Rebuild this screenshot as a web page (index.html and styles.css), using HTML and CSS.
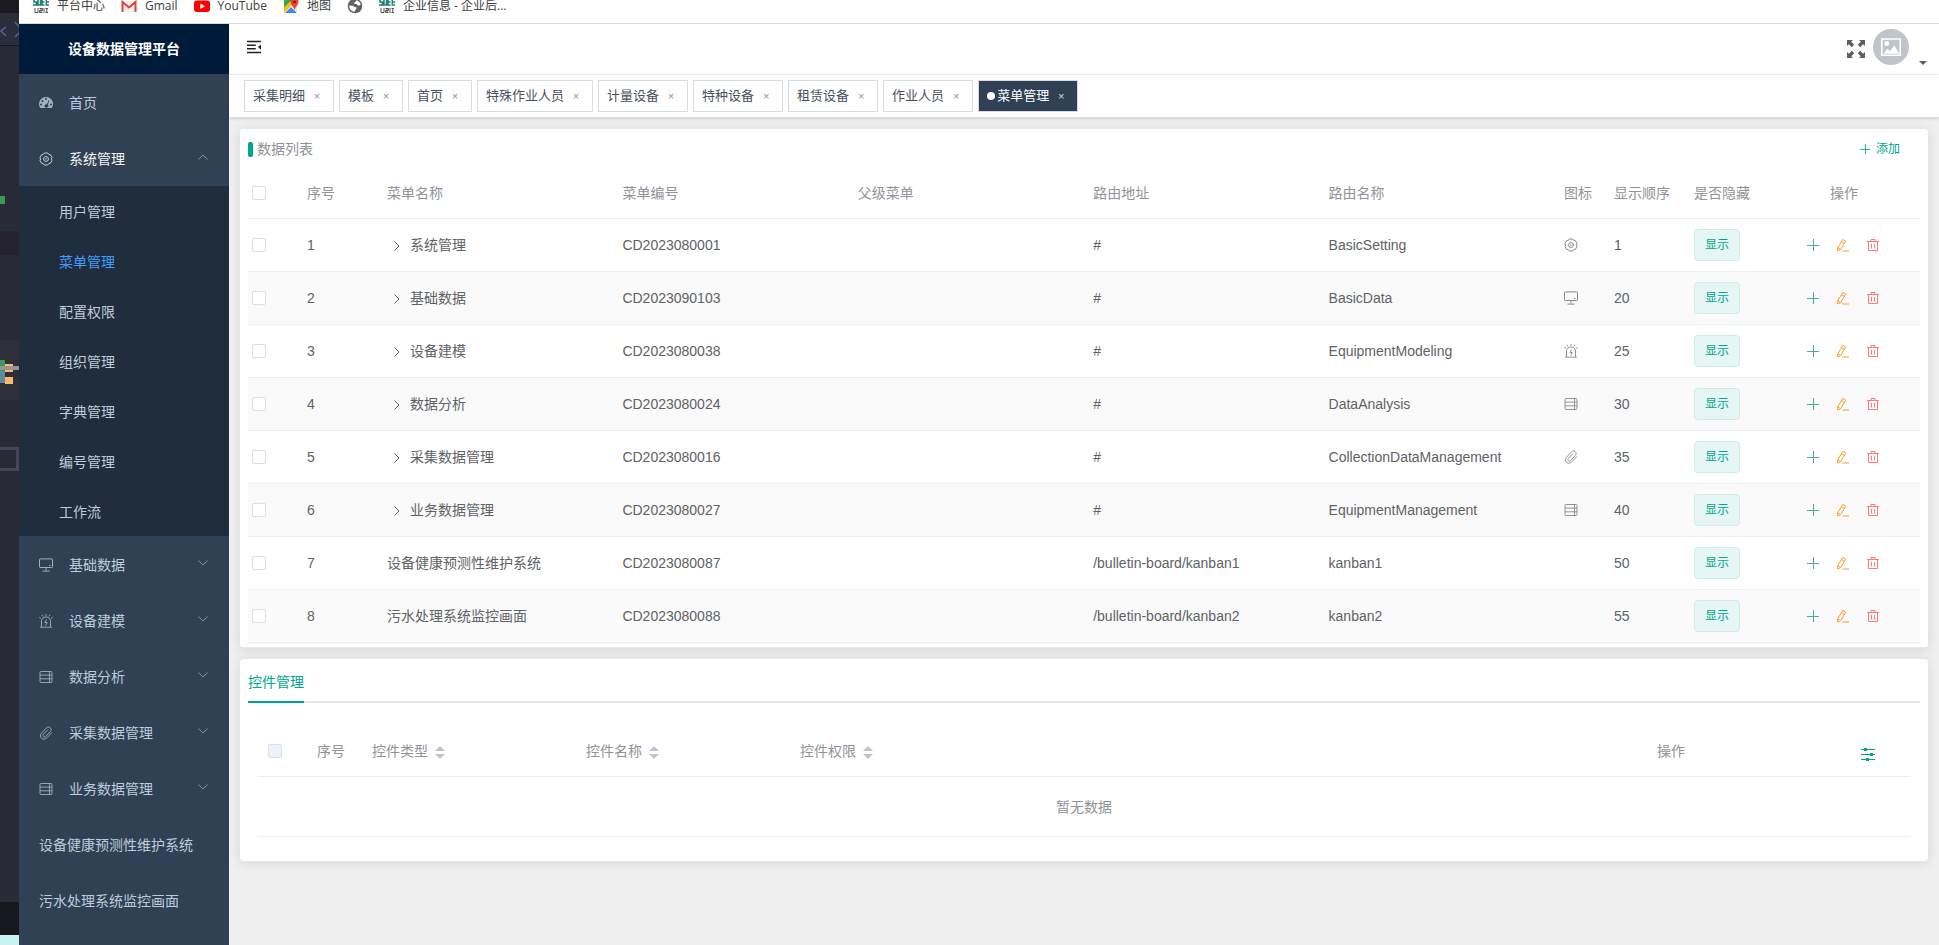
FILE: index.html
```html
<!DOCTYPE html>
<html lang="zh-CN">
<head>
<meta charset="utf-8">
<title>设备数据管理平台</title>
<link rel="stylesheet" href="styles.css">
</head>
<body>
<svg class="sprite" aria-hidden="true">
  <symbol id="i-dash" viewBox="0 0 14 14"><path fill="currentColor" fill-rule="evenodd" d="M7 1a7 7 0 0 0-7 7c0 1.400.4 2.700 1.100 3.700.1.200.3.300.5.300h10.800c.2 0 .4-.1.500-.3A7 7 0 0 0 7 1zM7 2a1 1 0 1 1 0 2 1 1 0 0 1 0-2zM2 7.500a1 1 0 1 1 0 2 1 1 0 0 1 0-2zM3.500 4a1 1 0 1 1 0 2 1 1 0 0 1 0-2zM12 7.500a1 1 0 1 1 0 2 1 1 0 0 1 0-2zM9.600 4.300l.8.300-1.500 4.100a1.900 1.900 0 1 1-3.400 1.400 1.900 1.900 0 0 1 2.500-1.800z"/></symbol>
  <symbol id="i-set" viewBox="0 0 14 14"><g fill="none" stroke="currentColor"><path stroke-linejoin="round" d="M5.300 1h3.400l1 1.400 1.700.3L13 5.500 12.500 7l.5 1.500-1.600 2.800-1.700.3-1 1.400H5.300l-1-1.400-1.700-.3L1 8.500 1.500 7 1 5.500l1.600-2.800 1.700-.3z"/><circle cx="7" cy="7" r="2.400"/><circle cx="7" cy="7" r=".7" fill="currentColor" stroke="none"/></g></symbol>
  <symbol id="i-mon" viewBox="0 0 14 14"><path fill="none" stroke="currentColor" d="M1.200.900h11.600q.7 0 .7.700v7.200q0 .7-.7.700H1.200q-.7 0-.7-.7V1.600q0-.7.7-.7zM7 9.500v3M3.500 13.100h7M10 7.500h1.500"/></symbol>
  <symbol id="i-alarm" viewBox="0 0 14 14"><path fill="none" stroke="currentColor" stroke-width=".9" d="M1 13.200h12M2.500 13V7a4.500 4 0 0 1 9 0v6M7 0v1.800M3 .8l1 1.600M11 .8l-1 1.600M.3 3.500l1.600.8M13.700 3.500l-1.600.8M7.500 5.500L5.800 8.500h2.400L6.600 11.500"/></symbol>
  <symbol id="i-data" viewBox="0 0 14 14"><path fill="none" stroke="currentColor" stroke-width=".9" d="M2 1.500h10q1 0 1 1v9q0 1-1 1H2q-1 0-1-1v-9q0-1 1-1zM1 5.100h12M1 8.800h12M10.500 1.500v11"/></symbol>
  <symbol id="i-clip" viewBox="0 0 14 14"><path fill="none" stroke="currentColor" stroke-width=".9" d="M12.800 6.500L8 11.700c-1.500 1.600-3.700 2-5.300.8S.9 9 2.400 7.300L7.300 2c1-1.100 2.800-1.400 4-.3s1 2.700 0 3.800L6.700 10.500c-.6.700-1.600.8-2.300.2s-.7-1.600 0-2.300L8.800 3.700"/></symbol>
  <symbol id="i-chev" viewBox="0 0 12 12"><path fill="none" stroke="currentColor" d="M1.500 3.500L6 8l4.500-4.500"/></symbol>
  <symbol id="i-plus" viewBox="0 0 14 14"><path fill="none" stroke="currentColor" d="M7.500 1v12M1 7.500h12"/></symbol>
  <symbol id="i-edit" viewBox="0 0 14 14"><path fill="none" stroke="currentColor" d="M6.500 13h6.500M6.700 1.500l3 1.600-5 8.500-3 1.400-.1-3zM5.500 3.700l3 1.700M1.800 9.800l2.800 1.700"/></symbol>
  <symbol id="i-del" viewBox="0 0 14 14"><path fill="none" stroke="currentColor" d="M1 3.500h12M2.500 3.500v9h9v-9M5 3.500v-2h4v2M5.500 6v4.500M8.500 6v4.500"/></symbol>
  <symbol id="i-sdee" viewBox="0 0 16 16"><path fill="none" stroke="#1d8177" stroke-width="1.500" d="M4 1H1v3h2.500v3H0M5 1v6h2.500V1zM11.500 1H9v6h2.500M9 4h2.500M16 1h-2.700v6H16M13 4h3"/><path fill="none" stroke="#555" d="M2 10v4.500h3V10M6.500 10.500h3v2h-3v2h3M8 10v5M11 10v5M12.500 10.500H15M12.500 14.500H15M13.800 10v5"/></symbol>
</svg>

<svg class="desktop" viewBox="0 0 19 945" aria-hidden="true">
  <path fill="#1b1a22" d="M0 0h19v13H0z"/><path fill="#2c2d3a" d="M0 13h19v33H0z"/><path fill="#17171f" d="M0 45h19v1H0z"/>
  <path fill="none" stroke="#5061a0" stroke-width="1.500" d="M6 27L1 31l5 5M15 22l7 8-7 7"/>
  <path fill="#40965b" d="M0 196h5v8H0z"/><path fill="#25242e" d="M0 231h19v24H0z"/><path fill="#2e2f3a" d="M0 340h19v60H0z"/>
  <path fill="#40965b" d="M0 360h5v11H0z"/><path fill="#5f8c9c" d="M0 371h5v12H0z"/>
  <path fill="#ffb870" d="M5 364h8v8H5zM5 377h8v7H5z"/><path fill="#94968f" d="M0 366h19v4H0z"/>
  <path fill="none" stroke="#45465c" stroke-width="3" d="M0 448.500h17.500v21H0"/>
  <path fill="#17171f" d="M0 902h19v33H0z"/><path fill="#c8f3f1" d="M0 935h19v10H0z"/>
</svg>

<div class="window">
  <nav class="bookmarks" aria-label="书签">
    <a href="#"><svg><use href="#i-sdee"/></svg>平台中心</a>
    <a href="#"><svg viewBox="0 0 16 16"><path fill="#eee" d="M1 3h14v11H1z"/><path fill="none" stroke="#db4437" stroke-width="2" d="M1.500 14V4L8 9.500 14.500 4v10"/></svg>Gmail</a>
    <a href="#"><svg viewBox="0 0 16 16"><rect y="2.500" width="16" height="11.500" rx="3" fill="#f00"/><path fill="#fff" d="M6.300 5.500v5.500L11 8.200z"/></svg>YouTube</a>
    <a href="#"><svg viewBox="0 0 16 16"><path fill="#34a853" d="M1 1h9L1 10z"/><path fill="#fbbc04" d="M1 15V10l9-9 3 2z"/><path fill="#4285f4" d="M2 15l6-6 6 6z"/><path fill="#ddd" d="M9 8l5-3v9z"/><path fill="#ea4335" d="M11.500 0a4 4 0 0 1 4 4c0 3-3 4-4 8-1-4-4-5-4-8a4 4 0 0 1 4-4z"/><circle cx="11.500" cy="4" r="1.300" fill="#811"/></svg>地图</a>
    <a href="#" aria-label="网站"><svg viewBox="0 0 16 16"><circle cx="8" cy="8" r="7.300" fill="#5f6368"/><path fill="#fff" d="M9.500 2.300c2 .5 3.700 2 4.200 4.200-1 .8-1.500 1.500-2.700 1-1-.5-.5-1.500-2-1.500S6.500 5.500 7.500 4.500s1.500-1 2-2.200zM2.300 7.500l3.200.2c1.500.3 1.500 1.300 3 1.300 1.200 0 1.500 1.300.5 2-.8.500-.5 1.500-1.500 2.700C4.500 13.500 2 11 2.300 7.500z"/></svg></a>
    <a href="#"><svg><use href="#i-sdee"/></svg>企业信息 - 企业后...</a>
  </nav>

  <div class="app">
    <aside class="sidebar">
      <h1 class="logo">设备数据管理平台</h1>
      <nav class="menu" aria-label="主菜单">
        <a class="item" href="#"><svg class="ico"><use href="#i-dash"/></svg>首页</a>
        <a class="item open" href="#"><svg class="ico"><use href="#i-set"/></svg>系统管理<svg class="arrow up"><use href="#i-chev"/></svg></a>
        <div class="submenu">
          <a href="#">用户管理</a>
          <a class="current" href="#">菜单管理</a>
          <a href="#">配置权限</a>
          <a href="#">组织管理</a>
          <a href="#">字典管理</a>
          <a href="#">编号管理</a>
          <a href="#">工作流</a>
        </div>
        <a class="item" href="#"><svg class="ico"><use href="#i-mon"/></svg>基础数据<svg class="arrow"><use href="#i-chev"/></svg></a>
        <a class="item" href="#"><svg class="ico"><use href="#i-alarm"/></svg>设备建模<svg class="arrow"><use href="#i-chev"/></svg></a>
        <a class="item" href="#"><svg class="ico"><use href="#i-data"/></svg>数据分析<svg class="arrow"><use href="#i-chev"/></svg></a>
        <a class="item" href="#"><svg class="ico"><use href="#i-clip"/></svg>采集数据管理<svg class="arrow"><use href="#i-chev"/></svg></a>
        <a class="item" href="#"><svg class="ico"><use href="#i-data"/></svg>业务数据管理<svg class="arrow"><use href="#i-chev"/></svg></a>
        <a class="item" href="#">设备健康预测性维护系统</a>
        <a class="item" href="#">污水处理系统监控画面</a>
      </nav>
    </aside>

    <div class="main">
      <header class="topbar">
        <button class="fold" aria-label="收起菜单"><svg viewBox="0 0 16 16"><path fill="none" stroke="currentColor" stroke-width="1.500" d="M0 1.700h16M0 6h10M0 10h10M0 14.300h16"/><path fill="currentColor" d="M16 5v6l-3.500-3z"/></svg></button>
        <div class="user">
          <button class="full" aria-label="全屏"><svg viewBox="0 0 18 18"><path id="fa" fill="currentColor" d="M0 0h6L4.200 1.800l3 3-2.400 2.400-3-3L0 6z"/><use href="#fa" transform="rotate(90 9 9)"/><use href="#fa" transform="rotate(180 9 9)"/><use href="#fa" transform="rotate(270 9 9)"/></svg></button>
          <button class="account" aria-label="账户">
            <svg class="avatar" viewBox="0 0 36 36"><circle cx="18" cy="18" r="18" fill="#c0c4cc"/><path fill="none" stroke="#fff" stroke-width="1.600" d="M8.800 10h18.400v16.200H8.800z"/><circle cx="13.800" cy="14.500" r="2.400" fill="#fff"/><path fill="#fff" d="M10.500 24.800l4-5 2.500 2.200 4.500-5.500 4.700 8.300z"/></svg>
            <svg class="caret" viewBox="0 0 8 4"><path fill="currentColor" d="M0 0h8L4 4z"/></svg>
          </button>
        </div>
      </header>

      <nav class="tabs" aria-label="已打开页面">
        <a href="#">采集明细<span class="x">×</span></a>
        <a href="#">模板<span class="x">×</span></a>
        <a href="#">首页<span class="x">×</span></a>
        <a href="#">特殊作业人员<span class="x">×</span></a>
        <a href="#">计量设备<span class="x">×</span></a>
        <a href="#">特种设备<span class="x">×</span></a>
        <a href="#">租赁设备<span class="x">×</span></a>
        <a href="#">作业人员<span class="x">×</span></a>
        <a class="on" href="#">菜单管理<span class="x">×</span></a>
      </nav>

      <main class="content">
        <section class="card list">
          <div class="card-head">
            <h2>数据列表</h2>
            <button class="add"><svg><use href="#i-plus"/></svg>添加</button>
          </div>
          <table class="grid">
            <colgroup><col class="w49"><col class="w80"><col><col><col><col><col><col class="w50"><col class="w80"><col class="w84"><col class="w152"></colgroup>
            <thead><tr><th class="ck"><input type="checkbox" aria-label="全选"></th><th>序号</th><th>菜单名称</th><th>菜单编号</th><th>父级菜单</th><th>路由地址</th><th>路由名称</th><th>图标</th><th>显示顺序</th><th>是否隐藏</th><th class="mid">操作</th></tr></thead>
            <tbody>
              <tr><td class="ck"><input type="checkbox" aria-label="选择 1"></td><td>1</td><td><button class="expand" aria-label="展开"><svg><use href="#i-chev"/></svg></button>系统管理</td><td>CD2023080001</td><td></td><td>#</td><td>BasicSetting</td><td><svg class="ico"><use href="#i-set"/></svg></td><td>1</td><td><span class="tag">显示</span></td><td><div class="ops"><button class="plus" aria-label="添加"><svg><use href="#i-plus"/></svg></button><button class="edit" aria-label="编辑"><svg><use href="#i-edit"/></svg></button><button class="del" aria-label="删除"><svg><use href="#i-del"/></svg></button></div></td></tr>
              <tr><td class="ck"><input type="checkbox" aria-label="选择 2"></td><td>2</td><td><button class="expand" aria-label="展开"><svg><use href="#i-chev"/></svg></button>基础数据</td><td>CD2023090103</td><td></td><td>#</td><td>BasicData</td><td><svg class="ico"><use href="#i-mon"/></svg></td><td>20</td><td><span class="tag">显示</span></td><td><div class="ops"><button class="plus" aria-label="添加"><svg><use href="#i-plus"/></svg></button><button class="edit" aria-label="编辑"><svg><use href="#i-edit"/></svg></button><button class="del" aria-label="删除"><svg><use href="#i-del"/></svg></button></div></td></tr>
              <tr><td class="ck"><input type="checkbox" aria-label="选择 3"></td><td>3</td><td><button class="expand" aria-label="展开"><svg><use href="#i-chev"/></svg></button>设备建模</td><td>CD2023080038</td><td></td><td>#</td><td>EquipmentModeling</td><td><svg class="ico"><use href="#i-alarm"/></svg></td><td>25</td><td><span class="tag">显示</span></td><td><div class="ops"><button class="plus" aria-label="添加"><svg><use href="#i-plus"/></svg></button><button class="edit" aria-label="编辑"><svg><use href="#i-edit"/></svg></button><button class="del" aria-label="删除"><svg><use href="#i-del"/></svg></button></div></td></tr>
              <tr><td class="ck"><input type="checkbox" aria-label="选择 4"></td><td>4</td><td><button class="expand" aria-label="展开"><svg><use href="#i-chev"/></svg></button>数据分析</td><td>CD2023080024</td><td></td><td>#</td><td>DataAnalysis</td><td><svg class="ico"><use href="#i-data"/></svg></td><td>30</td><td><span class="tag">显示</span></td><td><div class="ops"><button class="plus" aria-label="添加"><svg><use href="#i-plus"/></svg></button><button class="edit" aria-label="编辑"><svg><use href="#i-edit"/></svg></button><button class="del" aria-label="删除"><svg><use href="#i-del"/></svg></button></div></td></tr>
              <tr><td class="ck"><input type="checkbox" aria-label="选择 5"></td><td>5</td><td><button class="expand" aria-label="展开"><svg><use href="#i-chev"/></svg></button>采集数据管理</td><td>CD2023080016</td><td></td><td>#</td><td>CollectionDataManagement</td><td><svg class="ico"><use href="#i-clip"/></svg></td><td>35</td><td><span class="tag">显示</span></td><td><div class="ops"><button class="plus" aria-label="添加"><svg><use href="#i-plus"/></svg></button><button class="edit" aria-label="编辑"><svg><use href="#i-edit"/></svg></button><button class="del" aria-label="删除"><svg><use href="#i-del"/></svg></button></div></td></tr>
              <tr><td class="ck"><input type="checkbox" aria-label="选择 6"></td><td>6</td><td><button class="expand" aria-label="展开"><svg><use href="#i-chev"/></svg></button>业务数据管理</td><td>CD2023080027</td><td></td><td>#</td><td>EquipmentManagement</td><td><svg class="ico"><use href="#i-data"/></svg></td><td>40</td><td><span class="tag">显示</span></td><td><div class="ops"><button class="plus" aria-label="添加"><svg><use href="#i-plus"/></svg></button><button class="edit" aria-label="编辑"><svg><use href="#i-edit"/></svg></button><button class="del" aria-label="删除"><svg><use href="#i-del"/></svg></button></div></td></tr>
              <tr><td class="ck"><input type="checkbox" aria-label="选择 7"></td><td>7</td><td>设备健康预测性维护系统</td><td>CD2023080087</td><td></td><td>/bulletin-board/kanban1</td><td>kanban1</td><td></td><td>50</td><td><span class="tag">显示</span></td><td><div class="ops"><button class="plus" aria-label="添加"><svg><use href="#i-plus"/></svg></button><button class="edit" aria-label="编辑"><svg><use href="#i-edit"/></svg></button><button class="del" aria-label="删除"><svg><use href="#i-del"/></svg></button></div></td></tr>
              <tr><td class="ck"><input type="checkbox" aria-label="选择 8"></td><td>8</td><td>污水处理系统监控画面</td><td>CD2023080088</td><td></td><td>/bulletin-board/kanban2</td><td>kanban2</td><td></td><td>55</td><td><span class="tag">显示</span></td><td><div class="ops"><button class="plus" aria-label="添加"><svg><use href="#i-plus"/></svg></button><button class="edit" aria-label="编辑"><svg><use href="#i-edit"/></svg></button><button class="del" aria-label="删除"><svg><use href="#i-del"/></svg></button></div></td></tr>
            </tbody>
          </table>
        </section>

        <section class="card controls">
          <div class="card-tabs"><a href="#">控件管理</a></div>
          <div class="sub">
            <table class="grid">
              <colgroup><col class="w49"><col class="w55"><col class="w214"><col class="w214"><col><col class="w310"><col class="w84"></colgroup>
              <thead><tr><th><input type="checkbox" aria-label="全选控件" disabled></th><th>序号</th><th>控件类型<span class="sort"></span></th><th>控件名称<span class="sort"></span></th><th>控件权限<span class="sort"></span></th><th class="mid">操作</th><th class="mid"><button class="filter" aria-label="列设置"><svg viewBox="0 0 14 14"><path fill="none" stroke="currentColor" d="M0 2.500h14M0 7.500h14M0 12.500h14"/><path fill="currentColor" d="M3 1h3v3H3zM9 6h3v3H9zM5 11h3v3H5z"/></svg></button></th></tr></thead>
              <tbody><tr class="empty"><td colspan="7">暂无数据</td></tr></tbody>
            </table>
          </div>
        </section>
      </main>
    </div>
  </div>
</div>
</body>
</html>
```

FILE: styles.css
```css
* { box-sizing: border-box; }

body {
  margin: 0;
  display: flex;
  min-height: 100vh;
  overflow: hidden;
  background: #282a36;
  color: #606266;
  font: 14px/20px "Liberation Sans", "Noto Sans CJK SC", sans-serif;
}

a { color: inherit; text-decoration: none; }
svg { display: block; flex: none; }
button {
  padding: 0;
  border: 0;
  background: none;
  color: inherit;
  font: inherit;
  cursor: pointer;
}
.sprite { position: absolute; width: 0; height: 0; }

.desktop { width: 19px; }

.window {
  flex: 1;
  min-width: 0;
  display: flex;
  flex-direction: column;
}

/* bookmarks bar, its upper part is scrolled out of view */
.bookmarks {
  display: flex;
  align-items: flex-start;
  gap: 16px;
  height: 24px;
  padding-left: 14px;
  overflow: hidden;
  background: #fff;
  border-bottom: 1px solid #d8dadd;
  color: #3c4043;
  font: 12px/12px "Open Sans", "Noto Sans CJK SC", sans-serif;
}
.bookmarks a { display: flex; align-items: center; gap: 8px; height: 12px; }
.bookmarks svg { width: 16px; height: 16px; }

.app { flex: 1; display: flex; }

.sidebar { width: 210px; flex: none; background: #304156; }
.logo {
  margin: 0;
  background: #001b3a;
  color: #fff;
  font-size: 14px;
  line-height: 50px;
  text-align: center;
}
.menu a {
  display: flex;
  align-items: center;
  height: 56px;
  padding: 1px 20px 0;
  color: #bfcbd9;
}
.menu .open { color: #f4f4f5; }
.menu .ico { width: 14px; height: 14px; margin: 0 16px 0 0; opacity: .8; }
.arrow { width: 12px; height: 12px; margin: 0 0 3px auto; color: #8a949f; }
.arrow.up { transform: rotate(180deg); }
.submenu { background: #1f2d3d; }
.menu .submenu a { height: 50px; padding: 2px 20px 0 40px; }
.menu .submenu .current { color: #409eff; }

.main {
  flex: 1;
  min-width: 0;
  display: flex;
  flex-direction: column;
  background: #f0f0f0;
}

.topbar {
  display: flex;
  align-items: center;
  justify-content: space-between;
  height: 51px;
  padding: 0 12px 4px 17px;
  background: #fff;
  border-bottom: 1px solid #f3f3f4;
}
.fold { color: #222; }
.fold svg { width: 16px; height: 14px; }
.user { display: flex; align-items: center; gap: 8px; color: #5a5e66; }
.full { padding-top: 4px; }
.full svg { width: 18px; height: 18px; }
.account { display: flex; align-items: flex-end; gap: 10px; }
.avatar { width: 36px; height: 36px; }
.caret { width: 8px; height: 4px; }

.tabs {
  display: flex;
  align-items: center;
  gap: 5px;
  height: 43px;
  padding: 0 15px;
  background: #fff;
  border-bottom: 1px solid #d8dce5;
  box-shadow: 0 1px 3px rgba(0, 0, 0, .12), 0 0 3px rgba(0, 0, 0, .04);
}
.tabs a {
  display: flex;
  align-items: center;
  height: 32px;
  padding: 0 8px;
  border: 1px solid #d8dce5;
  background: #fff;
  color: #495060;
  font-size: 13px;
}
.tabs .x { width: 16px; margin-left: 4px; color: #909399; font-size: 11px; text-align: center; }
.tabs .on { background: #304156; color: #fff; }
.tabs .on .x { color: #d8dce5; }
.tabs .on::before {
  content: "";
  width: 8px;
  height: 8px;
  margin-right: 2px;
  border-radius: 50%;
  background: #fff;
}

.content { display: flex; flex-direction: column; gap: 10px; padding: 10px; }
.card {
  padding: 1px 8px;
  border: 1px solid #e4e7ed;
  border-radius: 4px;
  background: #fff;
  box-shadow: 0 2px 12px rgba(0, 0, 0, .1);
}
.list { padding-bottom: 4px; }
.card-head {
  display: flex;
  align-items: center;
  justify-content: space-between;
  height: 38px;
  padding-right: 20px;
}
.card-head h2 {
  display: flex;
  align-items: center;
  gap: 4px;
  margin: 0;
  color: #909399;
  font-size: 14px;
  font-weight: 400;
}
.card-head h2::before {
  content: "";
  width: 5px;
  height: 15px;
  border-radius: 2px;
  background: #00a68c;
}
.add { display: flex; align-items: center; gap: 5px; color: #00a68c; font-size: 12px; }
.add svg { width: 12px; height: 12px; }

.grid { width: 100%; border-collapse: separate; border-spacing: 0; table-layout: fixed; }
.w49 { width: 49px; }
.w50 { width: 50px; }
.w55 { width: 55px; }
.w80 { width: 80px; }
.w84 { width: 84px; }
.w152 { width: 152px; }
.w214 { width: 214px; }
.w310 { width: 310px; }
.grid th, .grid td {
  padding: 0 10px;
  border-bottom: 1px solid #ebeef5;
  text-align: left;
  vertical-align: middle;
  white-space: nowrap;
}
.grid th { height: 51px; color: #909399; font-weight: 400; }
.grid td { height: 53px; }
.grid tbody tr:nth-child(even) { background: #fafafa; }
.grid .ck { padding-left: 4px; }
.grid .mid { text-align: center; }
.grid input {
  appearance: none;
  display: block;
  width: 14px;
  height: 14px;
  margin: 0;
  border: 1px solid #dcdfe6;
  border-radius: 2px;
  background: #fff;
}
.grid input:disabled { background: #edf2fc; }
.grid .ico { width: 14px; height: 14px; color: #85888e; }

.expand { width: 20px; margin-right: 3px; vertical-align: middle; }
.expand svg { width: 12px; height: 12px; margin: 0 auto; transform: rotate(-90deg); }

.tag {
  display: block;
  width: 46px;
  height: 32px;
  border: 1px solid #ccede8;
  border-radius: 4px;
  background: #e6f6f4;
  color: #00a68c;
  font-size: 12px;
  line-height: 30px;
  text-align: center;
}
.ops { display: flex; justify-content: center; gap: 16px; padding-right: 2px; }
.ops svg { width: 14px; height: 14px; }
.plus { color: #4dac9d; }
.edit { color: #ff9d2e; }
.del { color: #ff7b7b; }

.controls { padding-bottom: 24px; }
.card-tabs { display: flex; padding-top: 4px; box-shadow: inset 0 -2px #e4e7ed; }
.card-tabs a { border-bottom: 2px solid #00a68c; color: #00a68c; line-height: 37px; }
.sub { padding: 23px 10px 0; }
.sort {
  display: inline-grid;
  gap: 3px;
  margin-left: 7px;
  vertical-align: middle;
}
.sort::before, .sort::after { content: ""; border: 5px solid transparent; }
.sort::before { border-top: 0; border-bottom-color: #c0c4cc; }
.sort::after { border-bottom: 0; border-top-color: #c0c4cc; }
.filter { color: #00a68c; vertical-align: middle; }
.filter svg { width: 14px; height: 14px; margin-top: 5px; }
.grid .empty td { height: 60px; color: #909399; text-align: center; }
```
